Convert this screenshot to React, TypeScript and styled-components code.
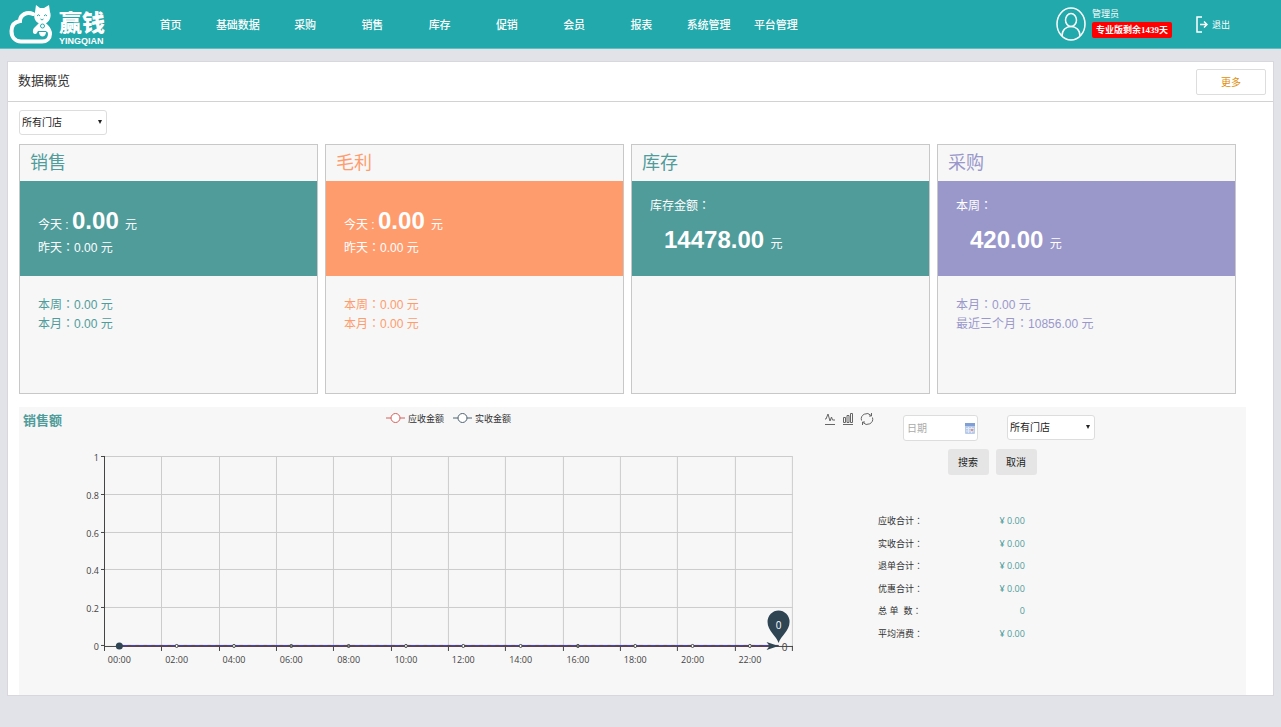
import React from "react";
import styled, { createGlobalStyle } from "styled-components";

const sans = `"Liberation Sans", "Noto Sans CJK SC", sans-serif`;
const cjk = `"Noto Sans CJK SC", sans-serif`;
const teal = "#4f9c9b";
const orange = "#ff9c6e";
const purple = "#9a98cb";

const GlobalStyle = createGlobalStyle`
  * { box-sizing: border-box; }
  body { margin: 0; background: #e2e3e8; font-family: ${sans}; color: #333; }
  button, input, select { font-family: inherit; margin: 0; }
  h1, h2, p { margin: 0; font-weight: 400; }
`;

const TopBar = styled.header`
  display: flex;
  align-items: center;
  height: 49px;
  padding: 0 51px 0 9px;
  background: #22a9ac;
  border-bottom: 1px solid #5fc0c3;
  color: #fff;
`;

const Brand = styled.a`
  display: flex;
  flex: none;
  width: 128px;
  gap: 6px;
  align-items: center;
  color: #fff;
  text-decoration: none;
`;

const BrandText = styled.span`
  display: flex;
  flex-direction: column;
  padding-top: 8px;
`;

const BrandName = styled.span`
  font: 900 23px/25px ${cjk};
`;

const BrandLatin = styled.span`
  font-weight: 700;
  font-size: 9px;
  line-height: 14px;
`;

const Nav = styled.nav`
  display: flex;
  flex: none;
  width: 52.5vw;
`;

const NavLink = styled.a`
  flex: 1 1 0;
  text-align: center;
  font: 500 11px/46px ${cjk};
  color: #fff;
  text-decoration: none;
  white-space: nowrap;
`;

const Account = styled.div`
  display: flex;
  align-items: center;
  gap: 6px;
  margin-left: auto;
`;

const AccountText = styled.div`
  display: flex;
  flex-direction: column;
  align-items: flex-start;
  padding-bottom: 4px;
  gap: 1px;
  font: 400 9px/15px ${cjk};
`;

const Plan = styled.span`
  padding: 0 4px;
  border-radius: 2px;
  background: #f00;
  font: 700 9px/16px "Liberation Serif", "Noto Sans CJK SC", serif;
  white-space: nowrap;
`;

const Logout = styled.button`
  display: flex;
  align-items: center;
  gap: 4px;
  margin-left: 18px;
  padding: 0;
  border: 0;
  background: none;
  color: #fff;
  font-size: 9px;
  white-space: nowrap;
`;

const Panel = styled.main`
  margin: 12px 7px 31px;
  border: 1px solid #d8d8dc;
  background: #fff;
`;

const PanelHead = styled.div`
  display: flex;
  align-items: center;
  justify-content: space-between;
  height: 40px;
  padding: 0 7px 0 10px;
  border-bottom: 1px solid #d2d2d2;
`;

const PanelTitle = styled.h1`
  padding-bottom: 4px;
  font-size: 13px;
`;

const MoreButton = styled.button`
  width: 70px;
  height: 26px;
  border: 1px solid #ddd;
  border-radius: 2px;
  background: #fff;
  color: #e08e0b;
  font-size: 10px;
`;

const PanelBody = styled.div`
  padding: 8px 27px 0 11px;
`;

const SelectBox = styled.span`
  position: relative;
  display: block;
  width: 88px;
  height: 25px;
  &::after {
    content: "";
    position: absolute;
    right: 5px;
    top: 10px;
    border: 2px solid transparent;
    border-top: 4px solid #222;
    border-bottom: 0;
    pointer-events: none;
  }
`;

const Select = styled.select`
  appearance: none;
  width: 100%;
  height: 100%;
  padding: 0 2px;
  border: 1px solid #ddd;
  border-radius: 3px;
  background: #fff;
  color: #222;
  font-size: 10px;
`;

const Cards = styled.div`
  display: grid;
  grid-template-columns: repeat(4, 1fr);
  gap: 7px;
  margin: 9px 10px 13px 0;
`;

const CardBox = styled.section<{ $tone: string }>`
  min-height: 250px;
  border: 1px solid #c8c8c8;
  background: #f7f7f7;
  color: ${(p) => p.$tone};
  font-size: 12px;
  line-height: 19px;
`;

const CardTitle = styled.h2`
  padding-left: 10px;
  font-size: 18px;
  line-height: 36px;
`;

const Band = styled.div<{ $tone: string; $top: number }>`
  height: 95px;
  padding: ${(p) => p.$top}px 18px 0;
  background: ${(p) => p.$tone};
  color: #fff;
`;

const HeadFigure = styled.p<{ $indent?: boolean }>`
  padding: ${(p) => (p.$indent ? "10px 0 0 14px" : "0")};
  line-height: 28px;
`;

const Big = styled.strong`
  margin-right: 3px;
  font-size: 24px;
  line-height: 28px;
`;

/* The Japanese face centres the full-width colon in its cell. */
const Colon = styled.span`
  font-family: "Noto Sans CJK JP", sans-serif;
  line-height: 1;
`;

const CardFoot = styled.div`
  padding: 20px 18px;
`;

const Sales = styled.section`
  display: grid;
  grid-template-columns: 7fr 3fr;
  background: #f7f7f7;
`;

const ChartHead = styled.div`
  display: grid;
  grid-template-columns: 1fr auto 1fr;
  height: 33px;
  padding: 0 4px;
`;

const ChartTitle = styled.h2`
  font-size: 13px;
  font-weight: 700;
  line-height: 28px;
  color: ${teal};
`;

const Legend = styled.div`
  display: flex;
  gap: 9px;
  height: 22px;
`;

const LegendItem = styled.span`
  display: flex;
  align-items: center;
  gap: 3px;
  font-size: 9px;
`;

const Tools = styled.div`
  display: flex;
  justify-content: flex-end;
  gap: 6px;
  height: 24px;
`;

const ToolButton = styled.button`
  display: flex;
  align-items: center;
  padding: 0;
  border: 0;
  background: none;
`;

const Plot = styled.svg`
  display: block;
  width: 100%;
  height: auto;
  font-family: "Open Sans", sans-serif;
  font-size: 9px;
  fill: #444;
`;

const Side = styled.div`
  padding-top: 8px;
`;

const Filters = styled.form`
  display: flex;
  flex-direction: column;
  gap: 8px;
`;

const FilterRow = styled.div<{ $left: number; $gap: number }>`
  display: flex;
  gap: ${(p) => p.$gap}px;
  padding-left: ${(p) => p.$left}px;
`;

const DateField = styled.label`
  display: flex;
  align-items: center;
  width: 75px;
  height: 26px;
  padding: 0 2px 0 3px;
  border: 1px solid #ddd;
  border-radius: 3px;
  background: #fff;
`;

const DateInput = styled.input`
  flex: 1;
  min-width: 0;
  padding: 0;
  border: 0;
  background: none;
  font-size: 10px;
  &::placeholder { color: #aaa; }
`;

const FormButton = styled.button`
  width: 41px;
  height: 26px;
  padding: 0 1px 1px 0;
  border: 0;
  border-radius: 3px;
  background: #e5e5e5;
  color: #222;
  font-size: 10px;
`;

const Totals = styled.table`
  width: 147px;
  height: 135px;
  margin-top: 35px;
  border-collapse: collapse;
  font-size: 9px;
  line-height: 14px;
  white-space: pre;
  th, td { padding: 0; }
  th { font-weight: 400; text-align: left; }
  td { text-align: right; color: ${teal}; font-family: "Open Sans", sans-serif; }
`;

const navItems = ["首页", "基础数据", "采购", "销售", "库存", "促销", "会员", "报表", "系统管理", "平台管理"];

const totals = [
  ["应收合计：", "¥ 0.00"],
  ["实收合计：", "¥ 0.00"],
  ["退单合计：", "¥ 0.00"],
  ["优惠合计：", "¥ 0.00"],
  ["总 单  数：", "0"],
  ["平均消费：", "¥ 0.00"],
];

type CardData = {
  title: string;
  tone: string;
  label: string;
  figure: string;
  second?: string;
  foot: string[];
};

const cards: CardData[] = [
  { title: "销售", tone: teal, label: "今天 : ", figure: "0.00", second: "昨天：0.00 元", foot: ["本周：0.00 元", "本月：0.00 元"] },
  { title: "毛利", tone: orange, label: "今天 : ", figure: "0.00", second: "昨天：0.00 元", foot: ["本周：0.00 元", "本月：0.00 元"] },
  { title: "库存", tone: teal, label: "库存金额：", figure: "14478.00", foot: [] },
  { title: "采购", tone: purple, label: "本周：", figure: "420.00", foot: ["本月：0.00 元", "最近三个月：10856.00 元"] },
];

function Labelled({ text }: { text: string }) {
  const [name, value] = text.split("：");
  return <>{name}<Colon>：</Colon>{value}</>;
}

function Card({ data }: { data: CardData }) {
  const { title, tone, label, figure, second, foot } = data;
  return (
    <CardBox $tone={tone}>
      <CardTitle>{title}</CardTitle>
      {second ? (
        <Band $tone={tone} $top={26}>
          <HeadFigure>{label}<Big>{figure}</Big> 元</HeadFigure>
          <p><Labelled text={second} /></p>
        </Band>
      ) : (
        <Band $tone={tone} $top={16}>
          <p><Labelled text={label} /></p>
          <HeadFigure $indent><Big>{figure}</Big> 元</HeadFigure>
        </Band>
      )}
      <CardFoot>{foot.map((line) => <p key={line}><Labelled text={line} /></p>)}</CardFoot>
    </CardBox>
  );
}

function Logo() {
  return (
    <svg width="44" height="42" viewBox="0 0 44 42" fill="none" aria-hidden="true">
      <path d="M24 11C18 8 11 12 11 18C5 19 2.500 23 2.500 28C2.500 34 6 38.500 12 38.500H33C38 38.500 41 35 41 31C41 27 39 25 37 23" stroke="#fff" strokeWidth="4" strokeLinecap="round" />
      <path d="M26 9L27 2L31 5H35L40 2L41 9C43 14 40 19 36 21H31C26 19 24 14 26 9Z" fill="#fff" />
      <path d="M30 20L25 25C23 28 24 31 26 31C28 31 28 29 29 28H37C38 30 41 29 40 26L37 20Z" fill="#fff" />
      <path d="M28 13Q29.500 10.500 31 13M35 13Q36.500 10.500 38 13M31.500 16Q33 18 34.500 16" stroke="#22a9ac" strokeWidth="1" />
      <circle cx="33.500" cy="23" r="2" stroke="#22a9ac" />
      <path d="M30 29H37C37 32 35 33.500 33.500 33.500S30 32 30 29Z" fill="#fff" />
    </svg>
  );
}

function StoreSelect({ label }: { label: string }) {
  return (
    <SelectBox>
      <Select aria-label={label}><option>所有门店</option></Select>
    </SelectBox>
  );
}

function LegendMark({ color }: { color: string }) {
  return (
    <svg width="19" height="12" fill="#fff" stroke={color}>
      <path d="M0 6H19" />
      <circle cx="9.500" cy="6" r="4.500" />
    </svg>
  );
}

const left = 86;
const right = 774;
const top = 17;
const base = 206;
const step = (right - left) / 12;
const greyDots = [3, 4, 8];

function SalesPlot() {
  const ticks = Array.from({ length: 13 }, (_, i) => Math.round(left + i * step) - 0.5);
  const rows = [1, 0.8, 0.6, 0.4, 0.2, 0];
  const first = left + step / 4;
  const last = first + step * 11.5;
  return (
    <Plot viewBox="0 0 859 255" role="img" aria-label="销售额">
      {rows.slice(0, 5).map((v) => {
        const y = Math.round(base - v * (base - top)) - 0.5;
        return <path key={v} d={`M${left} ${y}H${right}`} stroke="#ccc" />;
      })}
      {ticks.slice(1).map((x) => <path key={x} d={`M${x} ${top}V${base}`} stroke="#ccc" />)}
      <path d={`M${left - 0.5} ${top - 1}V${base}M${left} ${base + 0.5}H${right}`} stroke="#444" />
      {ticks.map((x) => <path key={x} d={`M${x} ${base}v5`} stroke="#444" />)}
      {rows.map((v) => {
        const y = Math.round(base - v * (base - top));
        return (
          <g key={v}>
            <path d={`M${left - 4} ${y - 0.5}h4`} stroke="#444" />
            <text x={left - 6} y={y + 4} textAnchor="end">{v}</text>
          </g>
        );
      })}
      <path d={`M${first} ${base - 0.5}H${last}`} stroke="#3a36d0" />
      <path d={`M${first} ${base + 0.5}H${last}`} stroke="#5c4450" />
      <path d={`M${first} ${base - 0.5}H${last}`} stroke="#5c4450" strokeDasharray="4 4" />
      {Array.from({ length: 12 }, (_, i) => (
        <g key={i}>
          {i > 0 && (
            <circle cx={first + i * step} cy={base} r="1.500" fill={greyDots.includes(i) ? "#888" : "#fff"} stroke="#444" />
          )}
          <text x={first + i * step} y={base + 17} textAnchor="middle">
            {String(i * 2).padStart(2, "0")}:00
          </text>
        </g>
      ))}
      <circle cx={first} cy={base} r="3.500" fill="#2f4554" />
      <path d={`M${last} ${base}l-12 -4l3 4l-3 4z`} fill="#2f4554" />
      <path d={`M${last} ${base - 3}c-2 -7 -11 -12 -11 -21a11 11.500 0 0 1 22 0c0 9 -9 14 -11 21z`} fill="#2f4554" />
      <text x={last} y={base - 17} textAnchor="middle" fill="#fff" fontSize="10">0</text>
      <text x={last + 6} y={base + 5} textAnchor="middle" fontSize="10">0</text>
    </Plot>
  );
}

export default function App() {
  return (
    <>
      <GlobalStyle />
      <TopBar>
        <Brand href="#">
          <Logo />
          <BrandText>
            <BrandName>赢钱</BrandName>
            <BrandLatin>YINGQIAN</BrandLatin>
          </BrandText>
        </Brand>
        <Nav>{navItems.map((item) => <NavLink key={item} href="#">{item}</NavLink>)}</Nav>
        <Account>
          <svg width="30" height="34" viewBox="0 0 30 34" fill="none" stroke="#fff" strokeWidth="1.500">
            <ellipse cx="15" cy="17" rx="14" ry="16" />
            <ellipse cx="15" cy="13" rx="5.500" ry="6.500" />
            <path d="M6 29C6 23 10 19.500 15 19.500S24 23 24 29" />
          </svg>
          <AccountText>
            <span>管理员</span>
            <Plan>专业版剩余1439天</Plan>
          </AccountText>
          <Logout type="button">
            <svg width="12" height="17" viewBox="0 0 12 17" fill="none" stroke="#fff" strokeWidth="1.500">
              <path d="M6 1H1V16H6M4 8.500H11M8 5.500L11 8.500L8 11.500" />
            </svg>
            退出
          </Logout>
        </Account>
      </TopBar>
      <Panel>
        <PanelHead>
          <PanelTitle>数据概览</PanelTitle>
          <MoreButton type="button">更多</MoreButton>
        </PanelHead>
        <PanelBody>
          <StoreSelect label="门店" />
          <Cards>{cards.map((c) => <Card key={c.title} data={c} />)}</Cards>
          <Sales>
            <div>
              <ChartHead>
                <ChartTitle>销售额</ChartTitle>
                <Legend>
                  <LegendItem><LegendMark color="#d4605a" />应收金额</LegendItem>
                  <LegendItem><LegendMark color="#4f6373" />实收金额</LegendItem>
                </Legend>
                <Tools>
                  <ToolButton type="button" aria-label="折线图">
                    <svg width="12" height="14" viewBox="0 0 12 14" fill="none" stroke="#666">
                      <path d="M1 7H2L4 2L6 9L7.500 5L8.500 8H11M1 12.500H11" />
                    </svg>
                  </ToolButton>
                  <ToolButton type="button" aria-label="柱状图">
                    <svg width="12" height="14" viewBox="0 0 12 14" fill="none" stroke="#666">
                      <path d="M1.500 10.500V5.500H3.500V10.500ZM5 10.500V3.500H7V10.500ZM8.500 10.500V1.500H10.500V10.500ZM1 12.500H11" />
                    </svg>
                  </ToolButton>
                  <ToolButton type="button" aria-label="还原">
                    <svg width="14" height="14" viewBox="0 0 14 14" fill="none" stroke="#666">
                      <path d="M1.500 8.500A5.500 5.500 0 0 1 11 3.500M12.500 5.500A5.500 5.500 0 0 1 3 10.500M11.500 1V4H9M2.500 13V10H5" />
                    </svg>
                  </ToolButton>
                </Tools>
              </ChartHead>
              <SalesPlot />
            </div>
            <Side>
              <Filters>
                <FilterRow $left={25} $gap={29}>
                  <DateField>
                    <DateInput placeholder="日期" aria-label="日期" />
                    <svg width="10" height="11" viewBox="0 0 10 11">
                      <rect width="10" height="11" rx="1" fill="#b9cbea" />
                      <rect width="10" height="3" fill="#7f9fd6" />
                      <path d="M1 5.500H9M1 8H9M3.500 4V10M6.500 4V10" stroke="#dfe8f6" strokeWidth="1" />
                      <rect x="6" y="6" width="2" height="2" fill="#e8927c" />
                    </svg>
                  </DateField>
                  <StoreSelect label="销售门店" />
                </FilterRow>
                <FilterRow $left={70} $gap={7}>
                  <FormButton type="button">搜索</FormButton>
                  <FormButton type="button">取消</FormButton>
                </FilterRow>
              </Filters>
              <Totals>
                <tbody>
                  {totals.map(([name, value]) => (
                    <tr key={name}><th scope="row"><Labelled text={name} /></th><td>{value}</td></tr>
                  ))}
                </tbody>
              </Totals>
            </Side>
          </Sales>
        </PanelBody>
      </Panel>
    </>
  );
}
